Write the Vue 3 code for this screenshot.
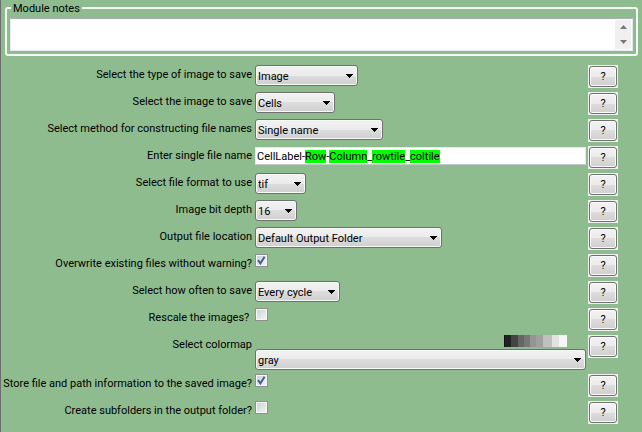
<script setup>
import { ref, reactive } from 'vue';

const notes = ref('');

// Cada fila del panel de ajustes
const settings = reactive([
  { id: 'image-type', label: 'Select the type of image to save', type: 'choice', value: 'Image', options: ['Image', 'Mask', 'Cropping', 'Movie', 'Objects'], width: 103 },
  { id: 'image-name', label: 'Select the image to save', type: 'choice', value: 'Cells', options: ['Cells'], width: 80 },
  { id: 'name-method', label: 'Select method for constructing file names', type: 'choice', value: 'Single name', options: ['Single name', 'From image filename', 'Sequential numbers'], width: 128 },
  {
    id: 'file-name', label: 'Enter single file name', type: 'text', value: 'CellLabel-Row-Column_rowtile_coltile',
    tags: ['Row', 'Column', 'rowtile', 'coltile']
  },
  { id: 'file-format', label: 'Select file format to use', type: 'choice', value: 'tif', options: ['tif', 'png', 'jpg', 'bmp'], width: 51 },
  { id: 'bit-depth', label: 'Image bit depth', type: 'choice', value: '16', options: ['8', '16'], width: 42 },
  { id: 'location', label: 'Output file location', type: 'choice', value: 'Default Output Folder', options: ['Default Output Folder', 'Default Input Folder'], width: 187 },
  { id: 'overwrite', label: 'Overwrite existing files without warning?', type: 'check', value: true },
  { id: 'how-often', label: 'Select how often to save', type: 'choice', value: 'Every cycle', options: ['Every cycle', 'First cycle', 'Last cycle'], width: 85 },
  { id: 'rescale', label: 'Rescale the images? ', type: 'check', value: false },
  { id: 'colormap', label: 'Select colormap', type: 'colormap', value: 'gray', options: ['gray', 'jet', 'hot', 'cool'] },
  { id: 'store-path', label: 'Store file and path information to the saved image?', type: 'check', value: true },
  { id: 'subfolders', label: 'Create subfolders in the output folder?', type: 'check', value: false },
]);

// Parte el nombre en trozos para resaltar los metadatos
const pieces = (s) => s.value
  .split(new RegExp(`(${s.tags.join('|')})`))
  .map(text => ({ text, tag: s.tags.includes(text) }));
</script>

<template>
  <main class="panel">
    <fieldset class="notes">
      <legend><label for="notes">Module notes</label></legend>
      <div class="notes-box">
        <textarea id="notes" v-model="notes" rows="1"></textarea>
        <div class="scroll">
          <button type="button" aria-label="Scroll up">
            <svg width="7" height="4" viewBox="0 0 7 4"><path d="M0 4L3.5 0L7 4Z" fill="#777" /></svg>
          </button>
          <button type="button" aria-label="Scroll down">
            <svg width="7" height="4" viewBox="0 0 7 4"><path d="M0 0H7L3.5 4Z" fill="#777" /></svg>
          </button>
        </div>
      </div>
    </fieldset>

    <form class="settings" @submit.prevent>
      <div v-for="s in settings" :key="s.id" class="row">
        <label class="name" :for="s.id">{{ s.label }}</label>

        <div v-if="s.type === 'text'" class="file-name">
          <div class="marks" aria-hidden="true"><span v-for="(p, i) in pieces(s)" :key="i" :class="{ tag: p.tag }">{{ p.text }}</span></div>
          <input :id="s.id" v-model="s.value" type="text" spellcheck="false">
        </div>

        <div v-else-if="s.type === 'check'" class="check">
          <input :id="s.id" v-model="s.value" type="checkbox">
          <svg v-if="s.value" class="tick" width="9" height="9" viewBox="0 0 9 9">
            <path d="M1 4.2L3.4 7.4L7.6 0.8" fill="none" stroke="#4a5f97" stroke-width="2" />
          </svg>
        </div>

        <div v-else class="choice">
          <div v-if="s.type === 'colormap'" class="ramp"></div>
          <div class="select" :style="{ width: s.width ? s.width + 'px' : '100%' }">
            <select :id="s.id" v-model="s.value">
              <option v-for="o in s.options" :key="o">{{ o }}</option>
            </select>
            <svg class="arrow" width="7" height="4" viewBox="0 0 7 4"><path d="M0 0H7V1H6V2H5V3H4V4H3V3H2V2H1V1H0Z" /></svg>
          </div>
        </div>

        <button type="button" class="help" :aria-label="'Help: ' + s.label"><span>?</span></button>
      </div>
    </form>
  </main>
</template>

<style>
body {
  margin: 0;
  background: #8fbc8f;
}
</style>

<style scoped>
* {
  box-sizing: border-box;
}

.panel {
  min-height: 100vh;
  border-left: 1px solid #6c6c6c;
  background: #8fbc8f;
  color: #000;
  font: 11px/16px Roboto, "Liberation Sans", sans-serif;
}

input,
select,
textarea,
button {
  margin: 0;
  font: inherit;
  color: inherit;
}

/* Notas */
.notes {
  min-width: 0;
  margin: 0 4px 9px;
  padding: 2px 3px 3px;
  border: 2px solid #f6faf6;
  border-radius: 3px;
}

.notes legend {
  height: 16px;
  margin-left: 1px;
  padding: 1px 2px 0;
}

.notes-box {
  display: flex;
  height: 33px;
  border: 1px solid #e3e9ef;
  border-top-color: #abadb3;
  background: #fff;
}

textarea {
  flex: 1;
  min-width: 0;
  padding: 1px 3px;
  border: 0;
  outline: none;
  resize: none;
  overflow: hidden;
  background: #fff;
}

.scroll {
  display: flex;
  flex-direction: column;
  width: 16px;
  margin: 1px;
  background: #f0f0f0;
}

.scroll button {
  flex: 1;
  display: flex;
  align-items: center;
  justify-content: center;
  padding: 0;
  border: 0;
  background: none;
}

/* Filas */
.settings {
  display: flex;
  flex-direction: column;
  gap: 4px;
  padding: 0 24px 8px 0;
}

.row {
  display: grid;
  grid-template-columns: 252px 1fr 30px;
  gap: 2px;
  align-items: start;
}

.name {
  padding: 2px 1px 0 0;
  text-align: right;
  white-space: pre;
}

/* Desplegables */
.choice {
  display: flex;
  flex-direction: column;
}

.select {
  display: grid;
  align-items: center;
}

.select > *,
.file-name > *,
.check > * {
  grid-area: 1 / 1;
}

select {
  appearance: none;
  width: 100%;
  height: 21px;
  padding: 2px 14px 0 2px;
  border: 1px solid #707070;
  border-radius: 3px;
  box-shadow: inset 0 0 0 1px #f8f8f8;
  background: linear-gradient(#f2f2f2, #ebebeb 50%, #dddddd 50%, #cfcfcf);
}

.arrow {
  justify-self: end;
  margin-right: 5px;
  pointer-events: none;
}

.ramp {
  align-self: flex-end;
  width: 63px;
  height: 12px;
  margin: 0 19px 2px 0;
  background: linear-gradient(90deg, #111 2%, #222 2% 11%, #444 11% 22%, #656565 22% 31%, #777 31% 41%, #949494 41% 51%, #a0a0a0 51% 62%, #c0c0c0 62% 76%, #e2e2e2 76% 87%, #f6f6f6 87%);
}

/* Nombre de archivo */
.file-name {
  display: grid;
  height: 18px;
  margin-top: 1px;
  border: 1px solid #e3e9ef;
  border-bottom-color: #c4c6ca;
  background: #fff;
}

.marks,
.file-name input {
  min-width: 0;
  height: 16px;
  padding: 1px 1px 0;
  line-height: 15px;
}

.marks {
  overflow: hidden;
  color: transparent;
  white-space: pre;
}

.tag {
  display: inline-block;
  height: 13px;
  line-height: 13px;
  background: #0f0;
}

.file-name input {
  border: 0;
  outline: none;
  background: transparent;
}

/* Casillas */
.check {
  display: grid;
  justify-content: start;
  place-items: center;
}

.check input {
  appearance: none;
  width: 13px;
  height: 13px;
  border: 1px solid #8e8f8f;
  box-shadow: inset 0 0 0 1px #f6f6f6;
  background: linear-gradient(135deg, #cbcfd5, #f6f6f6);
}

.tick {
  pointer-events: none;
}

/* Ayuda */
.help {
  height: 23px;
  padding: 1px;
  border: 0;
  background: #f0f0f0;
}

.help span {
  display: block;
  padding-top: 1px;
  border: 1px solid #707070;
  border-radius: 3px;
  box-shadow: inset 0 0 0 1px #fafafa;
  background: linear-gradient(#f2f2f2, #ebebeb 50%, #dddddd 50%, #cfcfcf);
  line-height: 18px;
}
</style>
